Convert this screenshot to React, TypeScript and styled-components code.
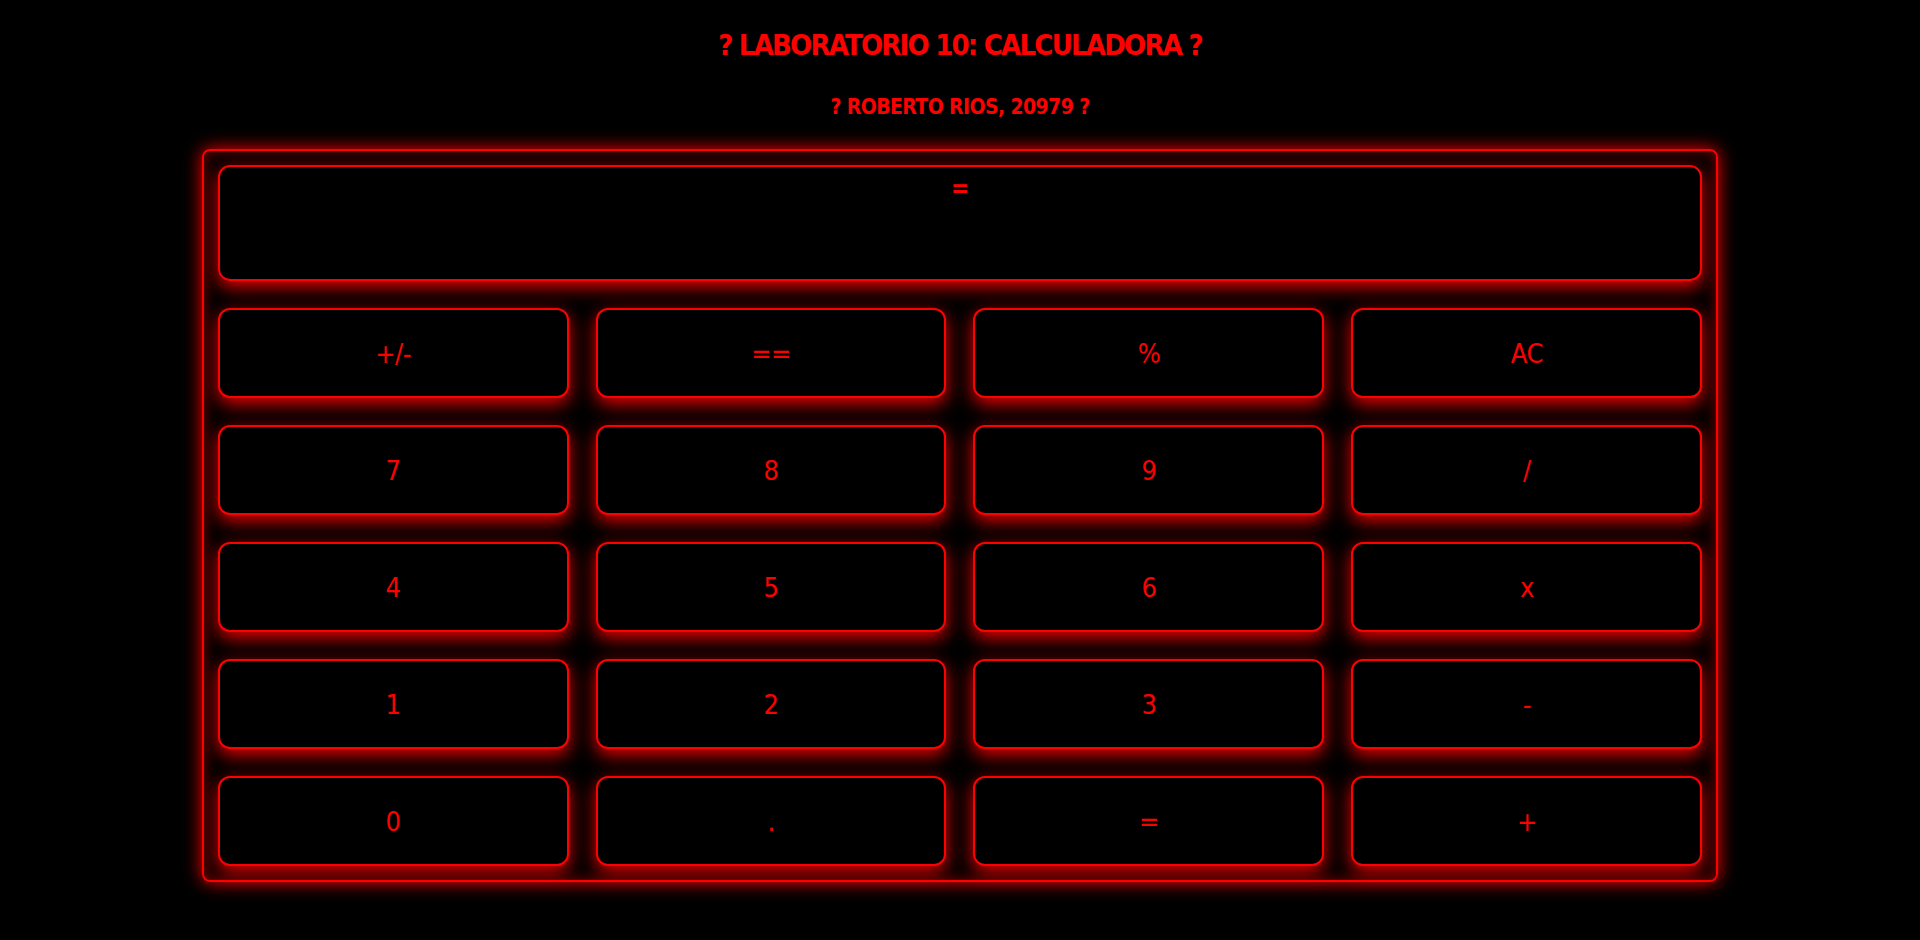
import React, { useState } from "react";
import styled, { createGlobalStyle } from "styled-components";

const GlobalStyle = createGlobalStyle`
  html, body {
    margin: 0;
    padding: 0;
    background: #000;
  }
  body {
    font-family: "DejaVu Sans Condensed", "DejaVu Sans", sans-serif;
    color: #ff0000;
  }
`;

const Page = styled.div`
  min-height: 940px;
  padding-top: 27px;
  box-sizing: border-box;
`;

const Title = styled.h1`
  margin: 0;
  text-align: center;
  font-size: 29px;
  line-height: 36px;
  font-weight: 700;
  letter-spacing: -1.8px;
  color: #ff0000;
`;

const Subtitle = styled.h2`
  margin: 32px 0 0;
  text-align: center;
  font-size: 21px;
  line-height: 25px;
  font-weight: 700;
  letter-spacing: -0.6px;
  color: #ff0000;
`;

const Calculator = styled.div`
  width: 79%;
  margin: 29px auto 0;
  box-sizing: border-box;
  border: 2px solid #ff0000;
  border-radius: 8px;
  padding: 14px;
  display: grid;
  grid-template-columns: repeat(4, 1fr);
  gap: 27px 27px;
  box-shadow: 0 0 18px #ff0000, inset 0 0 14px rgba(255, 0, 0, 0.5);
`;

const Display = styled.div`
  grid-column: 1 / -1;
  height: 116px;
  box-sizing: border-box;
  border: 2px solid #ff0000;
  border-radius: 12px;
  padding-top: 8px;
  text-align: center;
  font-size: 24px;
  font-weight: 700;
  line-height: 28px;
  box-shadow: 0 6px 18px rgba(255, 0, 0, 0.9);
`;

const Key = styled.button`
  height: 90px;
  box-sizing: border-box;
  background: #000;
  border: 2px solid #ff0000;
  border-radius: 12px;
  color: #ff0000;
  font-family: "DejaVu Sans Condensed", "DejaVu Sans", sans-serif;
  font-size: 27px;
  letter-spacing: -0.5px;
  cursor: pointer;
  box-shadow: 0 6px 18px rgba(255, 0, 0, 0.9);
`;

const keys = [
  "+/-", "==", "%", "AC",
  "7", "8", "9", "/",
  "4", "5", "6", "x",
  "1", "2", "3", "-",
  "0", ".", "=", "+",
];

export default function App() {
  const [display] = useState("=");
  return (
    <>
      <GlobalStyle />
      <Page>
        <Title>? LABORATORIO 10: CALCULADORA ?</Title>
        <Subtitle>? ROBERTO RIOS, 20979 ?</Subtitle>
        <Calculator>
          <Display>{display}</Display>
          {keys.map((k) => (
            <Key key={k}>{k}</Key>
          ))}
        </Calculator>
      </Page>
    </>
  );
}
